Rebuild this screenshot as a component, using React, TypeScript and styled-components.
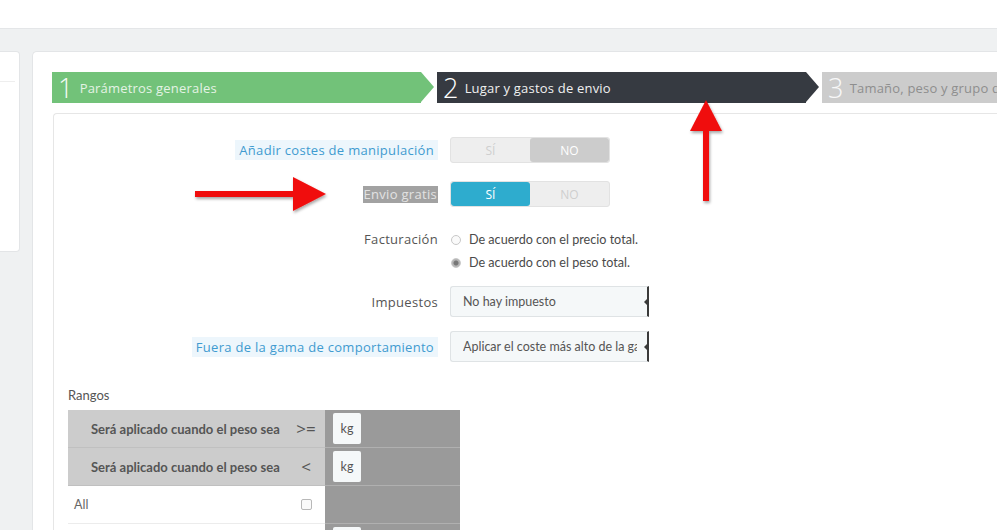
import React from 'react';
import styled, { createGlobalStyle } from 'styled-components';

const GlobalStyle = createGlobalStyle`
  html, body {
    margin: 0;
    padding: 0;
    background: #ffffff;
    font-family: 'Open Sans', 'Noto Sans', sans-serif;
  }
  * { box-sizing: border-box; }
`;

const Page = styled.div`
  position: relative;
  width: 997px;
  height: 530px;
  overflow: hidden;
`;

const TopBar = styled.div`
  height: 29px;
  background: #ffffff;
  border-bottom: 1px solid #e4e6e8;
`;

const Body = styled.div`
  display: flex;
  gap: 12px;
  height: 501px;
  padding-top: 22px;
  background: #eff1f2;
`;

const Sidebar = styled.div`
  width: 20px;
  height: 201px;
  background: #ffffff;
  border: 1px solid #e3e5e7;
  border-left: none;
  border-radius: 0 4px 4px 0;
  flex-shrink: 0;
`;

const SideHead = styled.div`
  height: 30px;
  margin-right: 4px;
  border-bottom: 1px solid #eeeeee;
`;

const Card = styled.div`
  flex: 1;
  background: #ffffff;
  border: 1px solid #e3e5e7;
  border-right: none;
  border-bottom: none;
  border-radius: 5px 0 0 0;
  padding: 20px 0 0 19px;
  overflow: hidden;
`;

const Steps = styled.div`
  display: flex;
  height: 31px;
  gap: 3px;
`;

const stepColors = {
  done: { bg: '#72c279', text: '#e4f3e5', num: '#f4fbf4' },
  current: { bg: '#363a41', text: '#f0f0f0', num: '#ffffff' },
  todo: { bg: '#cccccc', text: '#8e8e8e', num: '#f8f8f8' },
};

type StepState = keyof typeof stepColors;

const Step = styled.div<{ $state: StepState; $last?: boolean }>`
  position: relative;
  display: flex;
  align-items: center;
  flex-shrink: 0;
  width: ${p => (p.$last ? '260px' : '369px')};
  margin-right: ${p => (p.$last ? '0' : '13px')};
  padding-left: 6px;
  background: ${p => stepColors[p.$state].bg};
  color: ${p => stepColors[p.$state].text};
  font-size: 13px;
  letter-spacing: 0.2px;
  white-space: nowrap;
  overflow: visible;

  &::after {
    content: '';
    display: ${p => (p.$last ? 'none' : 'block')};
    position: absolute;
    right: -13px;
    top: 0;
    border-top: 15.5px solid transparent;
    border-bottom: 15.5px solid transparent;
    border-left: 13px solid ${p => stepColors[p.$state].bg};
  }
`;

const StepNum = styled.span<{ $state: StepState }>`
  font-size: 27px;
  font-weight: 300;
  line-height: 1;
  margin-right: 6px;
  color: ${p => stepColors[p.$state].num};
`;

const Panel = styled.div`
  margin-top: 10px;
  margin-left: 1px;
  height: 440px;
  border: 1px solid #e6e6e6;
  border-right: none;
  border-bottom: none;
  border-radius: 4px 0 0 0;
  padding: 23px 0 0 14px;
`;

const FormRow = styled.div<{ $mb: number }>`
  display: grid;
  grid-template-columns: 370px 1fr;
  column-gap: 12px;
  align-items: center;
  margin-bottom: ${p => p.$mb}px;
`;

const Label = styled.div`
  justify-self: end;
  font-size: 13px;
  color: #555555;
  letter-spacing: 0.3px;
  white-space: nowrap;
`;

const HintLabel = styled.span<{ $tone: 'info' | 'selected' }>`
  display: inline-block;
  padding: ${p => (p.$tone === 'info' ? '1px 4px' : '0 1px')};
  line-height: ${p => (p.$tone === 'info' ? '18px' : '17px')};
  background: ${p => (p.$tone === 'info' ? '#edf6fc' : '#a2a2a2')};
  color: ${p => (p.$tone === 'info' ? '#3f9bd0' : '#e2e2e2')};
`;

const Switch = styled.div`
  display: flex;
  width: 160px;
  height: 26px;
  border-radius: 3px;
  background: #eeeeee;
  border: 1px solid #e2e2e2;
  overflow: hidden;
`;

const SwitchOption = styled.div<{ $on?: boolean; $color?: string }>`
  flex: 1;
  display: flex;
  align-items: center;
  justify-content: center;
  font-size: 12px;
  color: ${p => (p.$on ? '#ffffff' : '#cfcfcf')};
  background: ${p => (p.$on ? p.$color : 'transparent')};
  border-radius: 3px;
`;

const Radios = styled.div`
  display: flex;
  flex-direction: column;
`;

const RadioLine = styled.label`
  display: flex;
  align-items: center;
  height: 23px;
  padding-left: 1px;
  font-family: 'Lato', sans-serif;
  font-size: 12.6px;
  color: #4a4a4a;
`;

const RadioDot = styled.span<{ $checked?: boolean }>`
  width: 10px;
  height: 10px;
  margin-right: 8px;
  border-radius: 50%;
  border: 1px solid #c8c8c8;
  background: ${p => (p.$checked ? 'radial-gradient(circle, #777 0 2px, #b5b5b5 3px)' : '#fafafa')};
`;

const FacturacionLabel = styled(Label)`
  align-self: start;
  line-height: 23px;
`;

const Select = styled.div`
  position: relative;
  width: 199px;
  height: 31px;
  display: flex;
  align-items: center;
  padding: 0 10px 0 12px;
  background: #f5f8f9;
  border: 1px solid #dfe3e5;
  border-right: 2px solid #3a3a3a;
  border-radius: 3px 0 0 3px;
  font-family: 'Lato', sans-serif;
  font-size: 12.5px;
  color: #555555;

  &::after {
    content: '';
    position: absolute;
    right: 0;
    top: 12px;
    border-top: 3px solid transparent;
    border-bottom: 3px solid transparent;
    border-right: 3px solid #3a3a3a;
  }
`;

const SelectText = styled.span`
  display: block;
  overflow: hidden;
  white-space: nowrap;
  text-overflow: clip;
`;

const SectionTitle = styled.div`
  font-family: 'Lato', sans-serif;
  font-size: 13px;
  color: #555555;
  height: 16px;
  margin-bottom: 7px;
`;

const RangeTable = styled.div`
  display: grid;
  grid-template-columns: 257px 135px;
  width: 392px;
`;

const LeftCell = styled.div<{ $head?: boolean }>`
  display: grid;
  grid-template-columns: 1fr 38px;
  align-items: center;
  height: 38px;
  padding-left: ${p => (p.$head ? '23px' : '6px')};
  background: ${p => (p.$head ? '#cccccc' : '#ffffff')};
  border-bottom: 1px solid ${p => (p.$head ? '#c0c0c0' : '#ececec')};
  font-family: 'Lato', sans-serif;
  font-size: ${p => (p.$head ? '13px' : '12.5px')};
  font-weight: ${p => (p.$head ? 700 : 400)};
  color: ${p => (p.$head ? '#555555' : '#666666')};
  white-space: nowrap;
`;

const Operator = styled.span`
  justify-self: center;
  font-family: 'Open Sans', sans-serif;
  font-size: 17px;
  font-weight: 400;
  color: #555555;
`;

const Check = styled.span`
  justify-self: center;
  width: 11px;
  height: 11px;
  border: 1px solid #b8b8b8;
  border-radius: 2px;
  background: #fafafa;
`;

const RightCell = styled.div`
  display: flex;
  align-items: center;
  height: 38px;
  padding-left: 8px;
  background: #9a9a9a;
  border-bottom: 1px solid #b0b0b0;
`;

const UnitBox = styled.span`
  display: flex;
  align-items: center;
  justify-content: center;
  width: 28px;
  height: 31px;
  background: #f5f8f9;
  border-radius: 2px;
  font-family: 'Lato', sans-serif;
  font-size: 12.5px;
  color: #555555;
`;

const Overlay = styled.svg`
  position: absolute;
  left: 0;
  top: 0;
  pointer-events: none;
`;

const RedArrows: React.FC = () => (
  <Overlay width={997} height={530}>
    <defs>
      <filter id="shadow" x="-20%" y="-20%" width="140%" height="140%">
        <feDropShadow dx="1" dy="2" stdDeviation="1.5" floodColor="#000" floodOpacity="0.35" />
      </filter>
    </defs>
    <g filter="url(#shadow)" fill="#f00b0b">
      <rect x={195} y={191} width={104} height={6} />
      <polygon points="293,177 326,194 293,211" />
      <rect x={703} y={128} width={6} height={73} />
      <polygon points="706,100 722,131 690,131" />
    </g>
  </Overlay>
);

const steps: { n: number; text: string; state: StepState }[] = [
  { n: 1, text: 'Parámetros generales', state: 'done' },
  { n: 2, text: 'Lugar y gastos de envio', state: 'current' },
  { n: 3, text: 'Tamaño, peso y grupo de acceso', state: 'todo' },
];

const App: React.FC = () => (
  <Page>
    <GlobalStyle />
    <TopBar />
    <Body>
      <Sidebar>
        <SideHead />
      </Sidebar>
      <Card>
        <Steps>
          {steps.map((s, i) => (
            <Step key={s.n} $state={s.state} $last={i === steps.length - 1}>
              <StepNum $state={s.state}>{s.n}</StepNum>
              {s.text}
            </Step>
          ))}
        </Steps>
        <Panel>
          <FormRow $mb={18}>
            <Label>
              <HintLabel $tone="info">Añadir costes de manipulación</HintLabel>
            </Label>
            <Switch>
              <SwitchOption>SÍ</SwitchOption>
              <SwitchOption $on $color="#cccccc">NO</SwitchOption>
            </Switch>
          </FormRow>
          <FormRow $mb={21}>
            <Label>
              <HintLabel $tone="selected">Envio gratis</HintLabel>
            </Label>
            <Switch>
              <SwitchOption $on $color="#2eacce">SÍ</SwitchOption>
              <SwitchOption>NO</SwitchOption>
            </Switch>
          </FormRow>
          <FormRow $mb={12}>
            <FacturacionLabel>Facturación</FacturacionLabel>
            <Radios>
              <RadioLine>
                <RadioDot />
                De acuerdo con el precio total.
              </RadioLine>
              <RadioLine>
                <RadioDot $checked />
                De acuerdo con el peso total.
              </RadioLine>
            </Radios>
          </FormRow>
          <FormRow $mb={14}>
            <Label>Impuestos</Label>
            <Select>
              <SelectText>No hay impuesto</SelectText>
            </Select>
          </FormRow>
          <FormRow $mb={25}>
            <Label>
              <HintLabel $tone="info">Fuera de la gama de comportamiento</HintLabel>
            </Label>
            <Select>
              <SelectText>Aplicar el coste más alto de la gama</SelectText>
            </Select>
          </FormRow>
          <SectionTitle>Rangos</SectionTitle>
          <RangeTable>
            <LeftCell $head>
              Será aplicado cuando el peso sea
              <Operator>&gt;=</Operator>
            </LeftCell>
            <RightCell>
              <UnitBox>kg</UnitBox>
            </RightCell>
            <LeftCell $head>
              Será aplicado cuando el peso sea
              <Operator>&lt;</Operator>
            </LeftCell>
            <RightCell>
              <UnitBox>kg</UnitBox>
            </RightCell>
            <LeftCell>
              All
              <Check />
            </LeftCell>
            <RightCell />
            <LeftCell />
            <RightCell>
              <UnitBox />
            </RightCell>
          </RangeTable>
        </Panel>
      </Card>
    </Body>
    <RedArrows />
  </Page>
);

export default App;
